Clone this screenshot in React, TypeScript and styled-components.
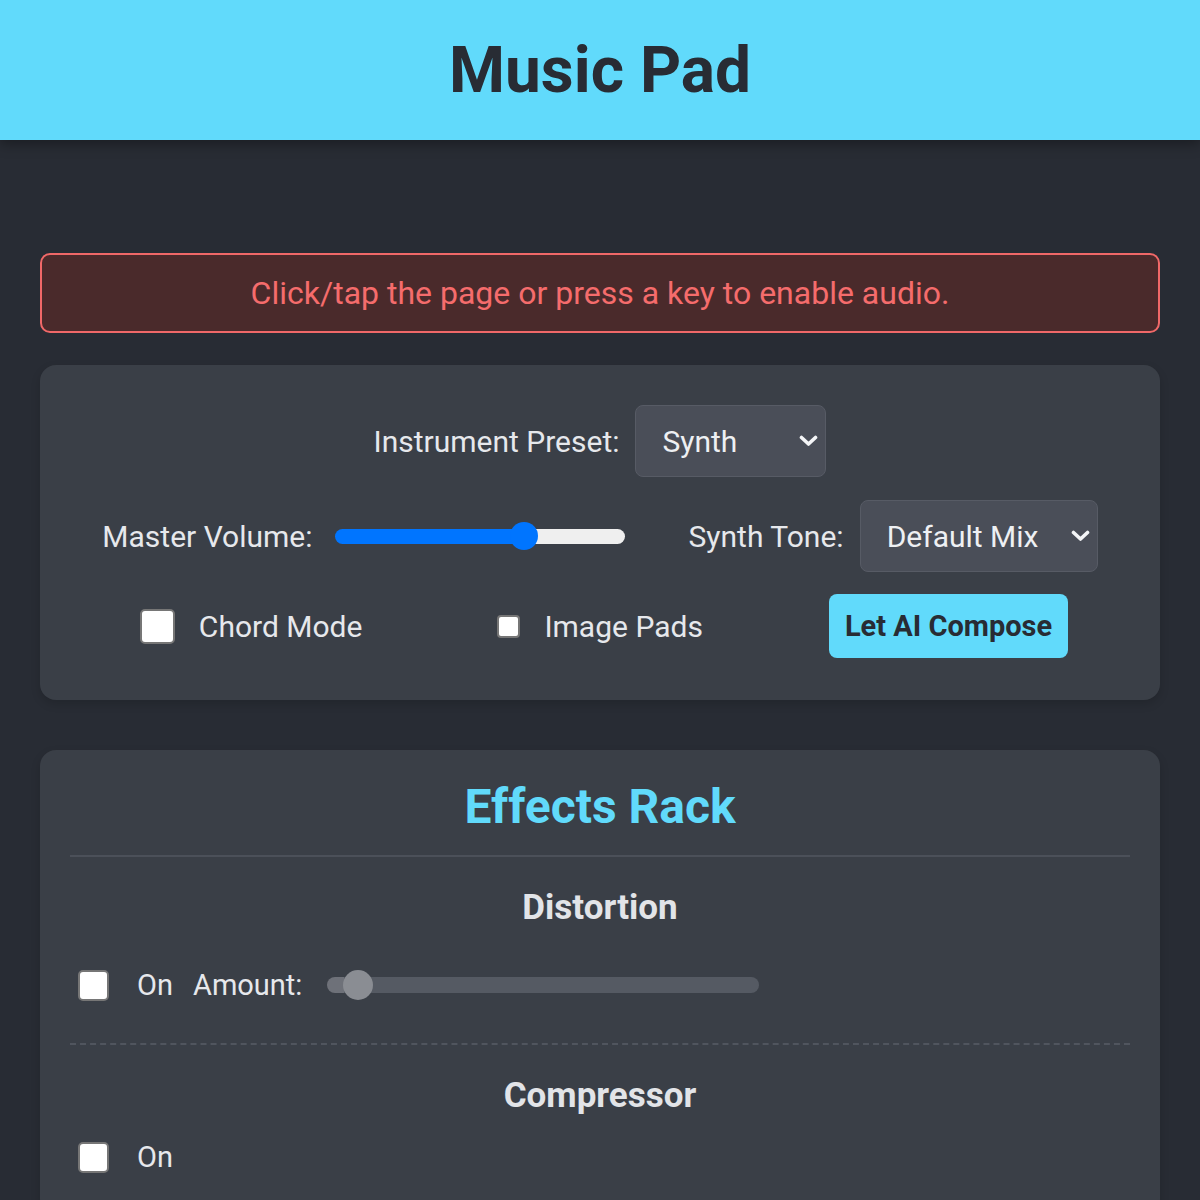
import React, { useState } from 'react';
import styled, { createGlobalStyle } from 'styled-components';

const GlobalStyle = createGlobalStyle`
  html, body {
    margin: 0;
    padding: 0;
    background-color: #282c34;
    font-family: Roboto, "Liberation Sans", Arial, sans-serif;
    color: #e6e8ec;
  }
  * { box-sizing: border-box; }
`;

const Header = styled.header`
  height: 140px;
  background-color: #61dafb;
  display: flex;
  align-items: center;
  justify-content: center;
  box-shadow: 0 4px 12px rgba(0, 0, 0, 0.35);
  position: relative;
  z-index: 1;
`;

const Title = styled.h1`
  margin: 0;
  font-size: 64px;
  font-weight: 700;
  color: #282c34;
`;

const Main = styled.main`
  padding: 113px 40px 40px;
  display: flex;
  flex-direction: column;
`;

const AudioNotice = styled.div`
  height: 80px;
  display: flex;
  align-items: center;
  justify-content: center;
  background-color: #4a2a2b;
  border: 2px solid #f06868;
  border-radius: 10px;
  color: #f56c6c;
  font-size: 32px;
`;

const Panel = styled.section<{ $gap?: number }>`
  margin-top: ${p => p.$gap ?? 32}px;
  background-color: #3a3f47;
  border-radius: 16px;
  box-shadow: 0 4px 10px rgba(0, 0, 0, 0.15);
`;

const ControlsPanel = styled(Panel)`
  padding: 40px 40px 42px;
  display: flex;
  flex-direction: column;
  align-items: center;
`;

const ControlRow = styled.div<{ $gap: number; $top?: number; $shift?: number }>`
  display: flex;
  align-items: center;
  justify-content: center;
  gap: ${p => p.$gap}px;
  margin-top: ${p => p.$top ?? 0}px;
  padding-left: ${p => p.$shift ?? 0}px;
`;

const Field = styled.label<{ $gap?: number; $offset?: number }>`
  display: flex;
  align-items: center;
  gap: ${p => p.$gap ?? 16}px;
  margin-left: ${p => p.$offset ?? 0}px;
  font-size: 30px;
  color: #e6e8ec;
`;

const SelectWrap = styled.div`
  position: relative;
  display: inline-flex;
`;

const Select = styled.select<{ $width: number }>`
  appearance: none;
  -webkit-appearance: none;
  width: ${p => p.$width}px;
  height: 72px;
  padding: 0 50px 0 26px;
  background-color: #4a4e58;
  border: 1px solid #575b65;
  border-radius: 8px;
  color: #eef0f3;
  font-family: inherit;
  font-size: 30px;
  outline: none;
`;

const Chevron = styled.svg`
  position: absolute;
  right: 8px;
  top: 50%;
  width: 19px;
  height: 12px;
  margin-top: -6px;
  pointer-events: none;
`;

const Range = styled.input<{
  $width: number;
  $trackH: number;
  $thumb: number;
  $fill: string;
  $rest: string;
  $thumbColor: string;
}>`
  -webkit-appearance: none;
  appearance: none;
  width: ${p => p.$width}px;
  height: ${p => p.$thumb}px;
  margin: 0;
  background: transparent;

  &::-webkit-slider-runnable-track {
    height: ${p => p.$trackH}px;
    border-radius: ${p => p.$trackH}px;
    background: linear-gradient(
      to right,
      ${p => p.$fill} 0,
      ${p => p.$fill} var(--pct),
      ${p => p.$rest} var(--pct),
      ${p => p.$rest} 100%
    );
  }

  &::-webkit-slider-thumb {
    -webkit-appearance: none;
    width: ${p => p.$thumb}px;
    height: ${p => p.$thumb}px;
    margin-top: ${p => (p.$trackH - p.$thumb) / 2}px;
    border-radius: 50%;
    background: ${p => p.$thumbColor};
    border: none;
  }
`;

const Check = styled.input<{ $size: number }>`
  -webkit-appearance: none;
  appearance: none;
  width: ${p => p.$size}px;
  height: ${p => p.$size}px;
  margin: 0;
  background: #ffffff;
  border: 2px solid #767676;
  border-radius: ${p => (p.$size > 26 ? 5 : 4)}px;
  flex-shrink: 0;
`;

const ComposeButton = styled.button<{ $offset?: number }>`
  height: 64px;
  padding: 0 16px;
  margin-left: ${p => p.$offset ?? 0}px;
  background-color: #61dafb;
  color: #282c34;
  border: none;
  border-radius: 8px;
  font-family: inherit;
  font-size: 29px;
  font-weight: 700;
  cursor: pointer;
`;

const EffectsPanel = styled(Panel)`
  padding: 28px 30px 0;
`;

const RackTitle = styled.h2`
  margin: 0;
  padding-bottom: 20px;
  border-bottom: 2px solid #4b5059;
  text-align: center;
  color: #61dafb;
  font-size: 48px;
  font-weight: 700;
`;

const Effect = styled.div<{ $last?: boolean; $gap: number }>`
  padding: 30px 8px 41px;
  border-bottom: ${p => (p.$last ? 'none' : '2px dashed #50555e')};
  display: flex;
  flex-direction: column;
  gap: ${p => p.$gap}px;
`;

const EffectName = styled.h3`
  margin: 0;
  text-align: center;
  font-size: 35px;
  font-weight: 700;
  color: #e2e4e8;
`;

const EffectRow = styled.div`
  display: flex;
  align-items: center;
  gap: 20px;
  font-size: 29px;
  color: #e6e8ec;
`;

const Toggle = styled.label`
  display: flex;
  align-items: center;
  gap: 28px;
`;

const AmountLabel = styled.span`
  margin-right: 5px;
`;

const ChevronIcon = () => (
  <Chevron viewBox="0 0 19 12" fill="none">
    <path d="M2.5 2.5 L9.5 9 L16.5 2.5" stroke="#f4f5f7" strokeWidth="3.6" strokeLinecap="round" strokeLinejoin="round" />
  </Chevron>
);

type Pct = React.CSSProperties & { ['--pct']: string };

export default function App() {
  const [volume, setVolume] = useState(67);
  const [amount, setAmount] = useState(4);

  return (
    <>
      <GlobalStyle />
      <Header>
        <Title>Music Pad</Title>
      </Header>
      <Main>
        <AudioNotice>Click/tap the page or press a key to enable audio.</AudioNotice>

        <ControlsPanel>
          <ControlRow $gap={60}>
            <Field>
              Instrument Preset:
              <SelectWrap>
                <Select $width={191} defaultValue="synth">
                  <option value="synth">Synth</option>
                  <option value="piano">Piano</option>
                  <option value="drums">Drums</option>
                </Select>
                <ChevronIcon />
              </SelectWrap>
            </Field>
          </ControlRow>

          <ControlRow $gap={64} $top={23}>
            <Field $gap={22}>
              Master Volume:
              <Range
                type="range"
                min={0}
                max={100}
                value={volume}
                onChange={e => setVolume(Number(e.target.value))}
                $width={290}
                $trackH={15}
                $thumb={28}
                $fill="#0075ff"
                $rest="#efefef"
                $thumbColor="#0075ff"
                style={{ '--pct': `${volume}%` } as Pct}
              />
            </Field>
            <Field>
              Synth Tone:
              <SelectWrap>
                <Select $width={238} defaultValue="default">
                  <option value="default">Default Mix</option>
                  <option value="warm">Warm</option>
                  <option value="bright">Bright</option>
                </Select>
                <ChevronIcon />
              </SelectWrap>
            </Field>
          </ControlRow>

          <ControlRow $gap={0} $top={22} $shift={8}>
            <Field $gap={24}>
              <Check type="checkbox" $size={35} />
              Chord Mode
            </Field>
            <Field $gap={24} $offset={135}>
              <Check type="checkbox" $size={23} />
              Image Pads
            </Field>
            <ComposeButton $offset={126}>Let AI Compose</ComposeButton>
          </ControlRow>
        </ControlsPanel>

        <EffectsPanel $gap={50}>
          <RackTitle>Effects Rack</RackTitle>

          <Effect $gap={40}>
            <EffectName>Distortion</EffectName>
            <EffectRow>
              <Toggle>
                <Check type="checkbox" $size={31} />
                On
              </Toggle>
              <AmountLabel>Amount:</AmountLabel>
              <Range
                type="range"
                min={0}
                max={100}
                value={amount}
                disabled
                onChange={e => setAmount(Number(e.target.value))}
                $width={432}
                $trackH={16}
                $thumb={30}
                $fill="#6e7179"
                $rest="#555a63"
                $thumbColor="#8a8d93"
                style={{ '--pct': `${amount}%` } as Pct}
              />
            </EffectRow>
          </Effect>

          <Effect $last $gap={24}>
            <EffectName>Compressor</EffectName>
            <EffectRow>
              <Toggle>
                <Check type="checkbox" $size={31} />
                On
              </Toggle>
            </EffectRow>
          </Effect>
        </EffectsPanel>
      </Main>
    </>
  );
}
